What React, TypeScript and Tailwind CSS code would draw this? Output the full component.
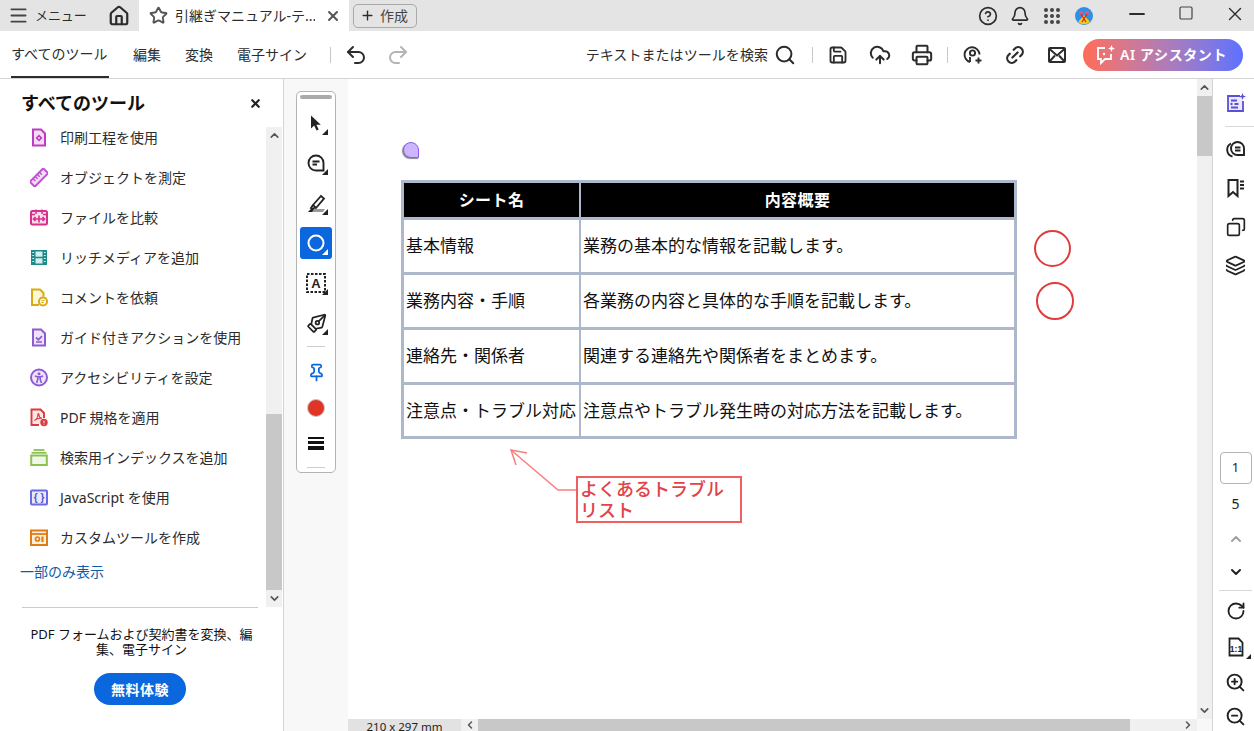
import React from "react";
import {
  Menu, House, Star, X, Plus, CircleHelp, Bell, Minus, Square, Undo2, Redo2, Search, Save, CloudUpload, Printer, Link2,
  ChevronUp, ChevronDown, ChevronLeft, ChevronRight, RotateCw, ZoomIn, ZoomOut, Layers, Copy, PenTool, Pin,
} from "lucide-react";

const Svg = ({ s = 19, vb = 18, children, className = "" }: { s?: number; vb?: number; children: React.ReactNode; className?: string }) => (
  <svg width={s} height={s} viewBox={`0 0 ${vb} ${vb}`} fill="none" className={className}>{children}</svg>
);

const Corner = ({ light = false }: { light?: boolean }) => (
  <span className={`absolute right-[4px] bottom-[4px] w-0 h-0 border-l-[6px] border-l-transparent border-b-[6px] ${light ? "border-b-white" : "border-b-[#222222]"}`} />
);

const toolIcons: Record<string, React.ReactNode> = {
  print: (
    <Svg><path d="M3 1h8l4 4v12H3z" fill="#f4dcf4" stroke="#bd3cc4" strokeWidth="2" /><path d="M9 6l3.500 3.500L9 13 5.500 9.500z" fill="#bd3cc4" /><circle cx="9" cy="9.500" r="1" fill="#f4dcf4" /></Svg>
  ),
  ruler: (
    <Svg><g transform="rotate(-45 9 9)"><rect x="-0.500" y="5.500" width="19" height="7" rx="1" fill="#f3dff6" stroke="#c052d2" strokeWidth="2" /><path d="M4 6v3M7 6v3M10 6v3M13 6v3" stroke="#c052d2" strokeWidth="1.500" /></g></Svg>
  ),
  compare: (
    <Svg><rect x="1" y="2.500" width="16" height="13.500" rx="1.500" fill="#fbdcec" stroke="#d92f8b" strokeWidth="2" /><path d="M6 1v4.500M12 1v4.500M1 6h4M13 6h4" stroke="#d92f8b" strokeWidth="1.500" /><path d="M3.500 10.500h11M5.500 8.500l-2 2 2 2M12.500 8.500l2 2-2 2M9 7v7" stroke="#d92f8b" strokeWidth="1.600" /></Svg>
  ),
  film: (
    <Svg><rect x="1" y="1.500" width="16" height="15" fill="#1f8a8a" /><rect x="5.500" y="3" width="7" height="5.200" fill="#d5eeee" /><rect x="5.500" y="9.800" width="7" height="5.200" fill="#d5eeee" /><path d="M2.300 4h1.800M2.300 7h1.800M2.300 10h1.800M2.300 13h1.800M13.900 4h1.800M13.900 7h1.800M13.900 10h1.800M13.900 13h1.800" stroke="#d5eeee" strokeWidth="1.100" /></Svg>
  ),
  comment: (
    <Svg><path d="M9 16.500H2V1h8l3.500 3.500v3.500" fill="#fdf6d8" stroke="#d8ab10" strokeWidth="2" /><circle cx="13" cy="13" r="4" fill="#fff" stroke="#d8ab10" strokeWidth="2" /><path d="M11.300 12.200h3.400M11.300 14h2.400" stroke="#d8ab10" strokeWidth="1" /></Svg>
  ),
  guide: (
    <Svg><path d="M3 1h8l4 4v12H3z" fill="#eee4fa" stroke="#8d5bd2" strokeWidth="2" /><path d="M6 9l2.400 2.200L12 7.600M6 13.500h6" stroke="#8d5bd2" strokeWidth="1.700" /></Svg>
  ),
  access: (
    <Svg><circle cx="9" cy="9" r="8" fill="#eee4fa" stroke="#8d5bd2" strokeWidth="2" /><circle cx="9" cy="5.300" r="1.500" fill="#8d5bd2" /><path d="M4.800 7.600l3 .8v2.400l-1.200 3.600M13.200 7.600l-3 .8v2.400l1.200 3.600M8 8.400h2" stroke="#8d5bd2" strokeWidth="1.600" /></Svg>
  ),
  pdf: (
    <Svg><path d="M9 16.500H1.500V1h9l3.500 3.500v5" fill="#fde6e6" stroke="#db3a3f" strokeWidth="1.900" /><path d="M4.500 12c2-1 3.500-4 3.400-6.200 0-1 1-.8 1 .1 0 2 1.600 3.600 3 4-2-.2-5.500.2-7.400 2.100z" stroke="#db3a3f" strokeWidth="1.100" /><circle cx="14" cy="14" r="3.700" fill="#db3a3f" /><path d="M14 12.200v2.200M14 15.200v.8" stroke="#fff" strokeWidth="1" /></Svg>
  ),
  index: (
    <Svg><rect x="1.200" y="7" width="15.600" height="9.500" fill="#f1f7e8" stroke="#8cc152" strokeWidth="2" /><path d="M1.500 4.300h15" stroke="#8cc152" strokeWidth="1.800" /><path d="M3.500 1.500h11" stroke="#8cc152" strokeWidth="1.800" /></Svg>
  ),
  js: (
    <Svg><rect x="1" y="2" width="16" height="14" rx="1" fill="#e9e9fc" stroke="#6a6ae2" strokeWidth="2" /><text x="9" y="12.600" textAnchor="middle" fontSize="10" fontWeight="700" fill="#5050d0" fontFamily="Liberation Sans, sans-serif">{"{ }"}</text></Svg>
  ),
  custom: (
    <Svg><rect x="1" y="2" width="16" height="14.500" fill="#fdf0df" stroke="#e27c12" strokeWidth="2" /><path d="M1.500 5.500h15" stroke="#e27c12" strokeWidth="1.800" /><circle cx="7.500" cy="10.500" r="2" stroke="#e27c12" strokeWidth="1.700" /><path d="M12.500 8v5.500" stroke="#e27c12" strokeWidth="2.200" /></Svg>
  ),
};

const tools: [string, string][] = [
  ["print", "印刷工程を使用"],
  ["ruler", "オブジェクトを測定"],
  ["compare", "ファイルを比較"],
  ["film", "リッチメディアを追加"],
  ["comment", "コメントを依頼"],
  ["guide", "ガイド付きアクションを使用"],
  ["access", "アクセシビリティを設定"],
  ["pdf", "PDF 規格を適用"],
  ["index", "検索用インデックスを追加"],
  ["js", "JavaScript を使用"],
  ["custom", "カスタムツールを作成"],
];

const rows: [string, string][] = [
  ["基本情報", "業務の基本的な情報を記載します。"],
  ["業務内容・手順", "各業務の内容と具体的な手順を記載します。"],
  ["連絡先・関係者", "関連する連絡先や関係者をまとめます。"],
  ["注意点・トラブル対応", "注意点やトラブル発生時の対応方法を記載します。"],
];

const TitleBar = () => (
  <div className="h-[31px] shrink-0 bg-[#e4e4e4] flex items-center text-[#2c2c2c]">
    <Menu size={21} strokeWidth={2.200} className="ml-[8px] text-[#444444]" />
    <span className="ml-[6px] text-[13px] tracking-[-0.1px] w-[50px] whitespace-nowrap">メニュー</span>
    <House size={22} strokeWidth={2.400} className="ml-[23px]" />
    <div className="ml-[9px] w-[210px] h-full bg-white flex items-center">
      <Star size={19} strokeWidth={2.400} className="ml-[10px] text-[#555555]" />
      <span className="ml-[7px] w-[140px] text-[14px] whitespace-nowrap overflow-hidden">引継ぎマニュアル-テ...</span>
      <X size={16} strokeWidth={3} className="ml-[10px] text-[#555555]" />
    </div>
    <div className="ml-[4px] w-[64px] h-[24px] border border-[#a8a8a8] rounded-[5px] flex items-center">
      <Plus size={15} strokeWidth={2.200} className="ml-[6px]" />
      <span className="ml-[5px] text-[14px] text-[#444444]">作成</span>
    </div>
    <div className="ml-auto flex items-center">
      <CircleHelp size={20} strokeWidth={2} />
      <Bell size={20} strokeWidth={2} className="ml-[12px]" />
      <svg width="16" height="16" viewBox="0 0 16 16" className="ml-[14px]" fill="#444444">
        {[2, 8, 14].map((y) => [2, 8, 14].map((x) => <circle key={`${x}-${y}`} cx={x} cy={y} r="2" />))}
      </svg>
      <svg width="18" height="18" viewBox="0 0 18 18" className="ml-[15px]">
        <circle cx="9" cy="9" r="9" fill="#2f8fe6" />
        <path d="M3 15l6-7 6 7a9 9 0 0 1-12 0z" fill="#f6c915" />
        <circle cx="6" cy="6" r="2" fill="#e05a78" />
        <circle cx="12" cy="6" r="2" fill="#e05a78" />
        <path d="M6 7l5 8M12 7l-5 8" stroke="#d8262c" strokeWidth="1.300" />
      </svg>
      <Minus size={24} strokeWidth={1.800} className="ml-[32px] mb-[3px]" />
      <Square size={16} strokeWidth={1.800} className="ml-[29px] mb-[5px] text-[#444444]" />
      <X size={22} strokeWidth={1.500} className="ml-[30px] mr-[8px] mb-[3px]" />
    </div>
  </div>
);

const Tb = ({ children }: { children: React.ReactNode }) => (
  <div className="w-[42px] h-full flex items-center justify-center text-[#2c2c2c]">{children}</div>
);

const Toolbar = () => (
  <div className="h-[48px] shrink-0 bg-white border-b border-[#d4d4d4] flex items-center text-[14px] text-[#2c2c2c]">
    <div className="ml-[11px] w-[98px] h-full border-b-2 border-[#2c2c2c] flex items-center whitespace-nowrap">すべてのツール</div>
    <span className="ml-[24px]">編集</span>
    <span className="ml-[24px]">変換</span>
    <span className="ml-[24px] whitespace-nowrap">電子サイン</span>
    <div className="ml-[23px] w-px h-[16px] bg-[#c8c8c8]" />
    <Undo2 size={24} strokeWidth={2} className="ml-[13px]" />
    <Redo2 size={24} strokeWidth={2} className="ml-[18px] text-[#b4b4b4]" />
    <div className="ml-auto flex items-center h-full">
      <span className="whitespace-nowrap tracking-[0.06px]">テキストまたはツールを検索</span>
      <Search size={22} strokeWidth={2.200} className="ml-[6px]" />
      <div className="ml-[16px] mr-[4px] w-px h-[16px] bg-[#c8c8c8]" />
      <Tb><Save size={20} strokeWidth={2.200} /></Tb>
      <Tb><CloudUpload size={22} strokeWidth={2.200} /></Tb>
      <Tb><Printer size={22} strokeWidth={2.200} /></Tb>
      <div className="mx-[4px] w-px h-[16px] bg-[#c8c8c8]" />
      <Tb>
        <svg width="20" height="20" viewBox="0 0 20 20" fill="none" stroke="#2c2c2c" strokeWidth="1.900">
          <path d="M7 17a7.500 7.500 0 1 1 9.500-7.500" />
          <circle cx="9.500" cy="8" r="2.600" />
          <path d="M7 12v5M15.500 12.500v6M12.500 15.500h6" />
        </svg>
      </Tb>
      <Tb><Link2 size={22} strokeWidth={2.400} className="-rotate-45" /></Tb>
      <Tb>
        <svg width="18" height="16" viewBox="0 0 18 16" fill="none" stroke="#2c2c2c" strokeWidth="2">
          <rect x="1" y="1" width="16" height="14" rx="1" />
          <path d="M1.500 2l7.500 6.500L16.500 2M1.500 14.500l5.500-6M16.500 14.500l-5.500-6" />
        </svg>
      </Tb>
      <div className="ml-[5px] mr-[11px] w-[160px] h-[32px] rounded-full bg-gradient-to-r from-[#ff6b55] to-[#5c70ff] flex items-center text-white">
        <svg width="22" height="22" viewBox="0 0 22 22" fill="none" stroke="#fff" strokeWidth="1.800" className="ml-[12px]">
          <path d="M10 4H3v11h3v4l4-4h6v-5" />
          <path d="M16.500 1l1 2.500 2.500 1-2.500 1-1 2.500-1-2.500-2.500-1 2.500-1z" fill="#fff" stroke="none" />
          <circle cx="9" cy="10" r="1.200" fill="#fff" stroke="none" />
        </svg>
        <span className="ml-[3px] text-[14px] font-semibold tracking-[0.6px] whitespace-nowrap">AI アシスタント</span>
      </div>
    </div>
  </div>
);

const LeftScroll = () => (
  <div className="w-[16px] mr-[1px] bg-[#f0f0f0] flex flex-col text-[#555555]">
    <div className="h-[16px] flex items-center justify-center"><ChevronUp size={13} strokeWidth={3} /></div>
    <div className="h-[271px]" />
    <div className="h-[176px] bg-[#c8c8c8]" />
    <div className="h-[17px] flex items-center justify-center"><ChevronDown size={13} strokeWidth={3} /></div>
  </div>
);

const LeftPanel = () => (
  <div className="w-[284px] shrink-0 border-r border-[#d4d4d4] bg-white flex flex-col text-[#2c2c2c]">
    <div className="h-[48px] flex items-center shrink-0">
      <span className="ml-[21px] text-[18px] leading-none font-bold text-[#111111] whitespace-nowrap">すべてのツール</span>
      <X size={13} strokeWidth={4} className="ml-[104px] text-[#222222]" />
    </div>
    <div className="h-[480px] shrink-0 flex">
      <div className="flex-1 overflow-hidden">
        <div className="mt-[-10px]">
          {tools.map(([k, label]) => (
            <div key={k} className="h-[40px] flex items-center">
              <div className="ml-[30px] w-[18px] h-[18px] flex items-center justify-center">{toolIcons[k]}</div>
              <span className="ml-[12px] text-[14px] whitespace-nowrap">{label}</span>
            </div>
          ))}
          <div className="mt-[4px] ml-[20px] h-[20px] flex items-center text-[14px] text-[#0b5cad]">一部のみ表示</div>
        </div>
      </div>
      <LeftScroll />
    </div>
    <div className="mx-[22px] mr-[25px] border-t border-[#cccccc]" />
    <div className="mt-[19px] px-[28px] text-center text-[13px] leading-[15px] text-[#111111]">PDF フォームおよび契約書を変換、編集、電子サイン</div>
    <div className="mt-[16px] self-start ml-[94px] w-[92px] h-[32px] rounded-full bg-[#0b67dd] flex items-center justify-center text-white text-[14px] font-bold tracking-[0.5px]">無料体験</div>
  </div>
);

const RailBtn = ({ children, active = false, corner = true }: { children: React.ReactNode; active?: boolean; corner?: boolean }) => (
  <div className={`relative w-[32px] h-[32px] rounded-[3px] flex items-center justify-center ${active ? "bg-[#0b67dd]" : ""}`}>
    {children}
    {corner && <Corner light={active} />}
  </div>
);

const ToolRail = () => (
  <div className="w-[64px] shrink-0 bg-[#f8f8f8] pt-[12px] pl-[12px]">
    <div className="w-[40px] h-[382px] bg-white border border-[#b4b4b4] rounded-[5px] flex flex-col items-center">
      <div className="mt-[3px] w-[32px] h-[4px] rounded-full bg-[#aaaaaa]" />
      <div className="mt-[4px] flex flex-col items-center">
        {[
          <svg key="a" width="18" height="18" viewBox="0 0 18 18" fill="#222222"><path d="M4 1.500v13l3.200-3 2.300 5 2.200-1-2.300-4.800h4.400z" /></svg>,
          <svg key="b" width="20" height="20" viewBox="0 0 20 20" fill="none" stroke="#222222" strokeWidth="1.900"><path d="M10 2.500a7.500 7.500 0 1 0 0 15h7.500V10A7.500 7.500 0 0 0 10 2.500z" /><path d="M6.500 8.500h7M6.500 11.500h4.500" /></svg>,
          <svg key="c" width="22" height="22" viewBox="0 0 22 22" fill="none"><path d="M8 13l8-9 3 2.500-8 9.500z" stroke="#222222" strokeWidth="1.800" /><path d="M8 13l-2 3 2 .5 2.500-1" stroke="#222222" strokeWidth="1.800" /><path d="M3 20l3-3h14l-2 3z" fill="#9a9a9a" /><path d="M3 20l3-3h3l-2 3z" fill="#222222" /></svg>,
          null,
          <svg key="e" width="24" height="24" viewBox="0 0 24 24" fill="none" stroke="#222222"><rect x="3" y="3" width="18" height="18" strokeWidth="2" strokeDasharray="2.500 1.500" /><text x="12" y="17" textAnchor="middle" fontSize="13" fontWeight="700" fill="#222222" stroke="none" fontFamily="Liberation Sans, sans-serif">A</text></svg>,
          <PenTool key="f" size={21} strokeWidth={2} className="text-[#222222] -scale-x-100" />,
        ].map((ic, i) => (
          <div key={i} className="h-[40px] flex items-center justify-center">
            {i === 3 ? (
              <RailBtn active><svg width="20" height="20" viewBox="0 0 20 20" fill="none" stroke="#fff" strokeWidth="2"><circle cx="10" cy="10" r="7.500" /></svg></RailBtn>
            ) : (
              <RailBtn>{ic}</RailBtn>
            )}
          </div>
        ))}
      </div>
      <div className="mt-[3px] w-[18px] border-t border-[#cccccc]" />
      <div className="mt-[7px] flex flex-col items-center">
        <div className="h-[36px] flex items-center"><Pin size={19} strokeWidth={2.200} className="text-[#0b67dd]" /></div>
        <div className="h-[36px] flex items-center"><div className="w-[18px] h-[18px] rounded-full bg-[#e03426] border border-[#c9c9c9]" /></div>
        <div className="h-[34px] flex items-center">
          <div className="w-[16px] flex flex-col gap-[2px]">
            <div className="h-[2px] bg-[#111111]" /><div className="h-[3px] bg-[#111111]" /><div className="h-[4px] bg-[#111111]" />
          </div>
        </div>
      </div>
      <div className="mt-[7px] w-[18px] border-t border-[#cccccc]" />
    </div>
  </div>
);

const Cell = ({ children, head = false }: { children: React.ReactNode; head?: boolean }) => (
  <div className={head
    ? "bg-black text-white font-bold text-[16px] tracking-[0.4px] flex items-center justify-center"
    : "bg-white text-[#111111] text-[17px] pl-[2px] flex items-center whitespace-nowrap overflow-hidden"}>
    {children}
  </div>
);

const Doc = () => (
  <div className="flex-1 relative overflow-hidden bg-white">
    <div className="mt-[101px] ml-[53px] w-[616px] bg-[#adb9ca] p-[3px] grid grid-cols-[175px_433px] grid-rows-[34px_52px_52px_52px_51px] gap-x-[2px] gap-y-[3px]">
      <Cell head>シート名</Cell>
      <Cell head>内容概要</Cell>
      {rows.map(([a, b]) => (
        <React.Fragment key={a}>
          <Cell>{a}</Cell>
          <Cell>{b}</Cell>
        </React.Fragment>
      ))}
    </div>

    {/* note annotation */}
    <div className="absolute left-[55px] top-[63px] w-[16px] h-[16px] rounded-t-full rounded-bl-full rounded-br-[2px] bg-[#cdb5ff] border-[1.5px] border-[#8a5cf0] shadow-[-1px_1px_1px_#8a8a8a]" />

    {/* circles */}
    <div className="absolute left-[686px] top-[151px] w-[37px] h-[37px] rounded-full border-2 border-[#e03c3c]" />
    <div className="absolute left-[688px] top-[203px] w-[38px] h-[38px] rounded-full border-2 border-[#e03c3c]" />

    {/* leader */}
    <svg className="absolute left-[150px] top-[360px]" width="78" height="60" viewBox="0 0 78 60" fill="none" stroke="#fb7f7f" strokeWidth="1.500">
      <path d="M13 11l47 40h18" />
      <path d="M29 14l-16-3 5 15" />
    </svg>

    {/* callout */}
    <div className="absolute left-[228px] top-[397px] w-[166px] h-[47px] border-2 border-[#ef5f62] bg-white pl-[2px] text-[18px] font-medium leading-[21px] text-[#e2424a] pt-[1px]">
      よくあるトラブル<br />リスト
    </div>
  </div>
);

const VScroll = () => (
  <div className="w-[15px] shrink-0 bg-[#f0f0f0] flex flex-col text-[#555555]">
    <div className="h-[17px] flex items-center justify-center"><ChevronUp size={13} strokeWidth={3} /></div>
    <div className="h-[60px] bg-[#c8c8c8]" />
    <div className="flex-1" />
    <div className="h-[17px] flex items-center justify-center"><ChevronDown size={13} strokeWidth={3} /></div>
  </div>
);

const HBar = () => (
  <div className="h-[12px] shrink-0 flex bg-[#f0f0f0] text-[#555555]">
    <div className="w-[113px] bg-[#e2e2e2] text-[11.5px] leading-[15px] text-center text-[#222222] whitespace-nowrap overflow-hidden">210 x 297 mm</div>
    <div className="w-[17px] flex items-center justify-center"><ChevronLeft size={12} strokeWidth={3} /></div>
    <div className="w-[652px] bg-[#c8c8c8]" />
    <div className="flex-1 flex justify-end items-center pr-[3px]"><ChevronRight size={12} strokeWidth={3} /></div>
    <div className="w-[15px] bg-[#f8f8f8]" />
  </div>
);

const RIcon = ({ h = 39, children, className = "" }: { h?: number; children: React.ReactNode; className?: string }) => (
  <div className={`relative w-full flex items-center justify-center ${className}`} style={{ height: h }}>{children}</div>
);

const RightRail = () => (
  <div className="w-[42px] shrink-0 border-l border-[#d4d4d4] bg-white pl-[4px] flex flex-col items-center overflow-hidden text-[#222222]">
    <div className="mt-[13px] h-[22px] flex items-center">
      <svg width="20" height="20" viewBox="0 0 20 20" fill="none" stroke="#5a4fd8" strokeWidth="1.800">
        <path d="M14 3H2v15h15V8" fill="#eceaff" />
        <path d="M5 7.500h6M8.500 11h4M5 14.500h7" />
        <circle cx="5.500" cy="11" r="1.200" fill="#5a4fd8" stroke="none" />
        <path d="M16.500 0l.9 2.600 2.600.9-2.600.9-.9 2.600-.9-2.600-2.600-.9 2.600-.9z" fill="#5a4fd8" stroke="none" />
      </svg>
    </div>
    <div className="mt-[12px] w-[29px] ml-[8px] border-t border-[#d8d8d8]" />
    <div className="mt-[2px] w-full">
      <RIcon>
        <svg width="20" height="20" viewBox="0 0 20 20" fill="none" stroke="#222222" strokeWidth="1.900">
          <path d="M11.500 3a6.500 6.500 0 1 0 0 13H18V9.500A6.500 6.500 0 0 0 11.500 3z" />
          <path d="M5 4.500a7 7 0 0 0 1.500 13" />
          <path d="M9 8.500h5.500M9 11.500h5.500" />
        </svg>
      </RIcon>
      <RIcon>
        <svg width="20" height="20" viewBox="0 0 20 20" fill="none" stroke="#222222" strokeWidth="2">
          <path d="M2.500 2h9v16l-4.500-4-4.500 4z" />
          <path d="M14 3.500h4M14 7h4M14 10.500h4" />
        </svg>
      </RIcon>
      <RIcon><Copy size={20} strokeWidth={2} className="-scale-x-100" /></RIcon>
      <RIcon><Layers size={21} strokeWidth={2} /></RIcon>
    </div>
    <div className="flex-1" />
    <div className="w-[32px] h-[32px] shrink-0 border border-[#b4b4b4] rounded-[4px] flex items-center justify-center text-[13px]">1</div>
    <RIcon h={38} className="text-[14px] shrink-0">5</RIcon>
    <RIcon h={34} className="shrink-0"><ChevronUp size={16} strokeWidth={3} className="text-[#a0a0a0]" /></RIcon>
    <RIcon h={32} className="shrink-0"><ChevronDown size={16} strokeWidth={3} /></RIcon>
    <div className="mt-[2px] mb-[2px] w-[33px] border-t border-[#d8d8d8] shrink-0" />
    <RIcon h={36} className="shrink-0"><RotateCw size={20} strokeWidth={2.200} /></RIcon>
    <RIcon h={35} className="shrink-0">
      <svg width="18" height="20" viewBox="0 0 18 20" fill="none" stroke="#222222" strokeWidth="1.800">
        <path d="M2.500 1.500h9l4 4v13h-13z" />
        <text x="9" y="15" textAnchor="middle" fontSize="8.500" fontWeight="700" fill="#222222" stroke="none" fontFamily="Liberation Sans, sans-serif">1:1</text>
      </svg>
      <span className="absolute right-[3px] bottom-[5px] w-0 h-0 border-l-[5px] border-l-transparent border-b-[5px] border-b-[#222222]" />
    </RIcon>
    <RIcon h={36} className="shrink-0"><ZoomIn size={21} strokeWidth={2.200} /></RIcon>
    <RIcon h={31} className="shrink-0 items-start pt-[6px]"><ZoomOut size={21} strokeWidth={2.200} /></RIcon>
  </div>
);

export default function App() {
  return (
    <div className="w-[1254px] h-[731px] overflow-hidden flex flex-col bg-white font-['Noto_Sans','Noto_Sans_CJK_JP',sans-serif]">
      <TitleBar />
      <Toolbar />
      <div className="flex-1 flex min-h-0">
        <LeftPanel />
        <ToolRail />
        <div className="flex-1 flex flex-col min-w-0">
          <div className="flex-1 flex min-h-0">
            <Doc />
            <VScroll />
          </div>
          <HBar />
        </div>
        <RightRail />
      </div>
    </div>
  );
}
